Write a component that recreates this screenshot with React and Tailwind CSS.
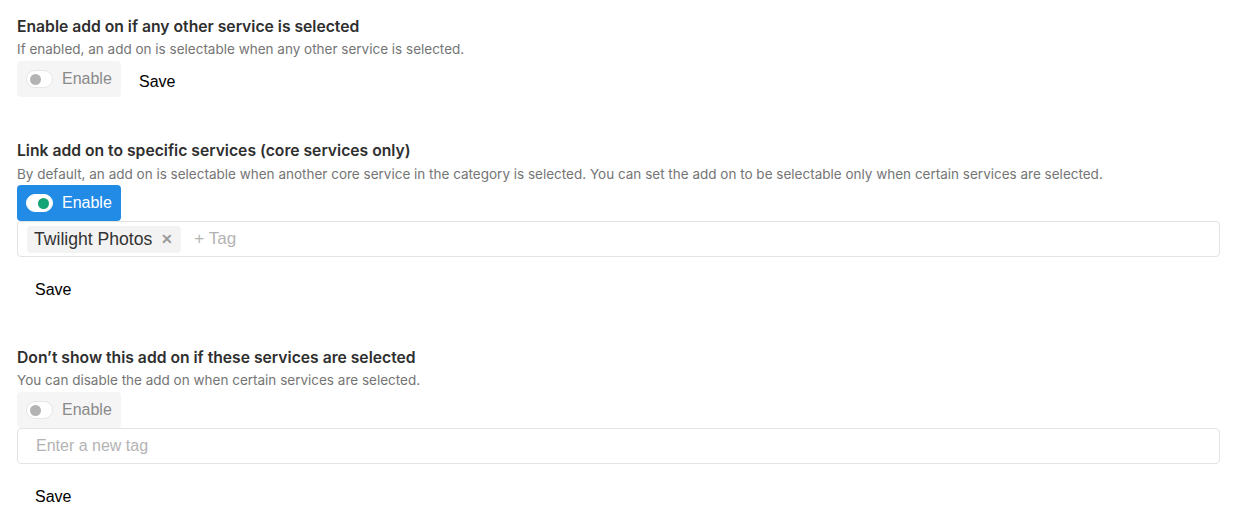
import React, { useState } from 'react'

function Toggle({ on }) {
  return (
    <span
      className={
        'relative inline-block w-[27px] h-[18px] rounded-full border ' +
        (on ? 'bg-white border-white' : 'bg-white border-[#e6e6e6]')
      }
    >
      <span
        className={
          'absolute top-[3px] w-[11px] h-[11px] rounded-full ' +
          (on ? 'right-[3px] bg-[#13a374]' : 'left-[3px] bg-[#b3b3b3]')
        }
      />
    </span>
  )
}

function EnableButton({ on }) {
  return (
    <button
      type="button"
      className={
        'flex items-center gap-[9px] w-[104px] h-[36px] pl-[9px] rounded-[4px] text-[16px] ' +
        (on ? 'bg-[#228be6] text-white' : 'bg-[#f5f5f5] text-[#8a8a8a]')
      }
    >
      <Toggle on={on} />
      <span>Enable</span>
    </button>
  )
}

function Section({ title, desc, descClass, children }) {
  return (
    <section>
      <h2 className="font-['Inter',sans-serif] text-[15.7px] font-semibold text-[#2f2f2f] leading-[22px]">
        {title}
      </h2>
      <p className={"font-['Inter',sans-serif] text-[13.5px] text-[#757575] leading-[18px] " + descClass}>
        {desc}
      </p>
      {children}
    </section>
  )
}

export default function App() {
  const [tags, setTags] = useState(['Twilight Photos'])

  return (
    <div className="font-['Liberation_Sans',Arial,sans-serif] bg-white min-h-screen pl-[17px] pr-[14px] pt-[16px]">
      <Section
        title="Enable add on if any other service is selected"
        desc="If enabled, an add on is selectable when any other service is selected."
        descClass="mt-[2px] mb-[3px]"
      >
        <div className="flex items-center gap-[18px]">
          <EnableButton on={false} />
          <button type="button" className="text-[16px] leading-[18px] text-black mt-[6px]">Save</button>
        </div>
      </Section>

      <div className="mt-[43px]">
        <Section
          title="Link add on to specific services (core services only)"
          desc="By default, an add on is selectable when another core service in the category is selected. You can set the add on to be selectable only when certain services are selected."
          descClass="mt-[3px] mb-[2px]"
        >
          <EnableButton on={true} />
          <div className="flex items-center gap-[13px] h-[36px] border border-[#e3e3e3] rounded-[4px] px-[9px]">
            {tags.map((t) => (
              <span key={t} className="flex items-center gap-[9px] h-[27px] pl-[7px] pr-[8px] rounded-[4px] bg-[#f3f3f3] text-[17.6px] text-[#333]">
                {t}
                <button
                  type="button"
                  onClick={() => setTags(tags.filter((x) => x !== t))}
                  className="text-[#9a9a9a] text-[14px] font-bold leading-none"
                >
                  ✕
                </button>
              </span>
            ))}
            <span className="text-[17px] text-[#b3b3b3]">+ Tag</span>
          </div>
          <button type="button" className="block text-[16px] leading-[18px] text-black ml-[18px] mt-[24px]">Save</button>
        </Section>
      </div>

      <div className="mt-[48px]">
        <Section
          title="Don’t show this add on if these services are selected"
          desc="You can disable the add on when certain services are selected."
          descClass="mt-[2px] mb-[3px]"
        >
          <EnableButton on={false} />
          <input
            placeholder="Enter a new tag"
            className="block w-full h-[36px] border border-[#e3e3e3] rounded-[4px] px-[18px] text-[16px] placeholder:text-[#b3b3b3] outline-none"
          />
          <button type="button" className="block text-[16px] leading-[18px] text-black ml-[18px] mt-[24px]">Save</button>
        </Section>
      </div>
    </div>
  )
}
